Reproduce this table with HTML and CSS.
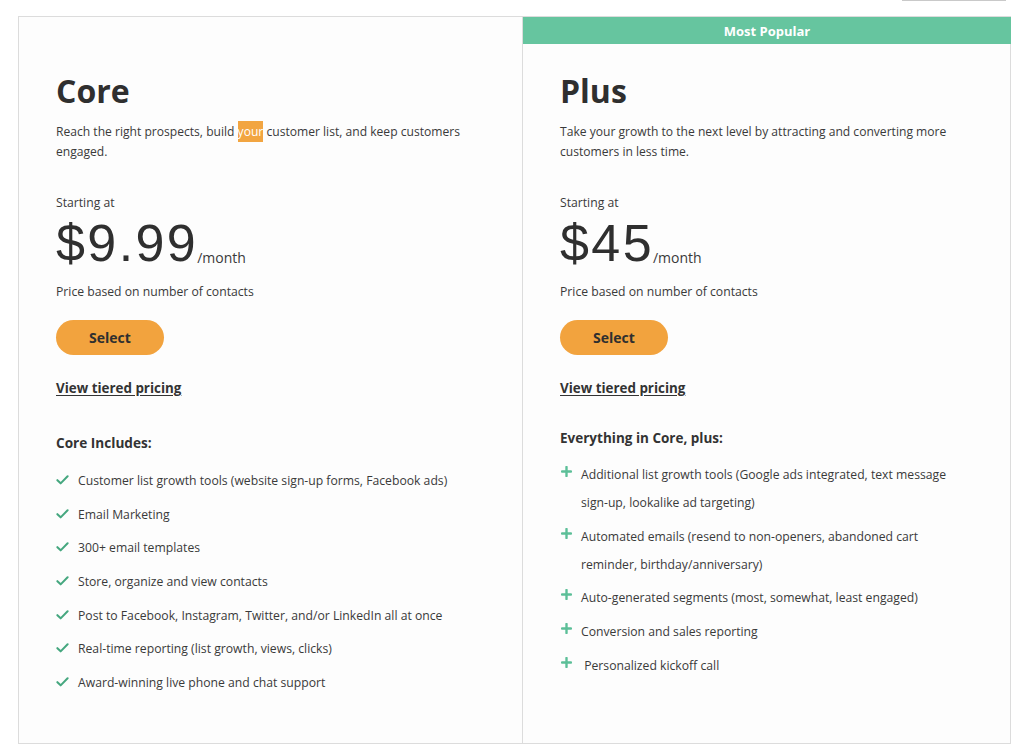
FILE: index.html
```html
<!DOCTYPE html>
<html lang="en">
<head>
<meta charset="utf-8">
<title>Pricing</title>
<link rel="stylesheet" href="styles.css">
</head>
<body>
<div class="topbar"><span class="topline"></span></div>
<div class="plans">
  <section class="plan plan-core">
    <div class="badge badge-empty"></div>
    <div class="plan-body">
      <h2 class="plan-name">Core</h2>
      <p class="plan-desc"><span>Reach the right prospects, build </span><mark class="hl">your</mark><span> customer list, and keep customers</span> <span>engaged.</span></p>
      <p class="starting">Starting at</p>
      <div class="price"><span class="amount">$9.99</span><span class="per">/month</span></div>
      <p class="based">Price based on number of contacts</p>
      <button class="select">Select</button>
      <a class="tiered" href="#">View tiered pricing</a>
      <h3 class="includes includes-core">Core Includes:</h3>
      <ul class="features">
        <li><svg class="ico" viewBox="0 0 14 12"><path d="M1.5 6.2 L5 9.6 L12.5 2" fill="none" stroke="#45a77f" stroke-width="2.2" stroke-linecap="round" stroke-linejoin="round"/></svg><span>Customer list growth tools (website sign-up forms, Facebook ads)</span></li>
        <li><svg class="ico" viewBox="0 0 14 12"><path d="M1.5 6.2 L5 9.6 L12.5 2" fill="none" stroke="#45a77f" stroke-width="2.2" stroke-linecap="round" stroke-linejoin="round"/></svg><span>Email Marketing</span></li>
        <li><svg class="ico" viewBox="0 0 14 12"><path d="M1.5 6.2 L5 9.6 L12.5 2" fill="none" stroke="#45a77f" stroke-width="2.2" stroke-linecap="round" stroke-linejoin="round"/></svg><span>300+ email templates</span></li>
        <li><svg class="ico" viewBox="0 0 14 12"><path d="M1.5 6.2 L5 9.6 L12.5 2" fill="none" stroke="#45a77f" stroke-width="2.2" stroke-linecap="round" stroke-linejoin="round"/></svg><span>Store, organize and view contacts</span></li>
        <li><svg class="ico" viewBox="0 0 14 12"><path d="M1.5 6.2 L5 9.6 L12.5 2" fill="none" stroke="#45a77f" stroke-width="2.2" stroke-linecap="round" stroke-linejoin="round"/></svg><span>Post to Facebook, Instagram, Twitter, and/or LinkedIn all at once</span></li>
        <li><svg class="ico" viewBox="0 0 14 12"><path d="M1.5 6.2 L5 9.6 L12.5 2" fill="none" stroke="#45a77f" stroke-width="2.2" stroke-linecap="round" stroke-linejoin="round"/></svg><span>Real-time reporting (list growth, views, clicks)</span></li>
        <li><svg class="ico" viewBox="0 0 14 12"><path d="M1.5 6.2 L5 9.6 L12.5 2" fill="none" stroke="#45a77f" stroke-width="2.2" stroke-linecap="round" stroke-linejoin="round"/></svg><span>Award-winning live phone and chat support</span></li>
      </ul>
    </div>
  </section>
  <section class="plan plan-plus">
    <div class="badge">Most Popular</div>
    <div class="plan-body">
      <h2 class="plan-name">Plus</h2>
      <p class="plan-desc"><span>Take your growth to the next level by attracting and converting more</span> <span>customers in less time.</span></p>
      <p class="starting">Starting at</p>
      <div class="price"><span class="amount">$45</span><span class="per">/month</span></div>
      <p class="based">Price based on number of contacts</p>
      <button class="select">Select</button>
      <a class="tiered" href="#">View tiered pricing</a>
      <h3 class="includes includes-plus">Everything in Core, plus:</h3>
      <ul class="features features-plus">
        <li><svg class="ico plus-ico" viewBox="0 0 12 12"><path d="M6 1 V11 M1 6 H11" fill="none" stroke="#5cbf98" stroke-width="2.6" stroke-linecap="round"/></svg><span>Additional list growth tools (Google ads integrated, text message sign-up, lookalike ad targeting)</span></li>
        <li><svg class="ico plus-ico" viewBox="0 0 12 12"><path d="M6 1 V11 M1 6 H11" fill="none" stroke="#5cbf98" stroke-width="2.6" stroke-linecap="round"/></svg><span>Automated emails (resend to non-openers, abandoned cart reminder, birthday/anniversary)</span></li>
        <li><svg class="ico plus-ico" viewBox="0 0 12 12"><path d="M6 1 V11 M1 6 H11" fill="none" stroke="#5cbf98" stroke-width="2.6" stroke-linecap="round"/></svg><span>Auto-generated segments (most, somewhat, least engaged)</span></li>
        <li><svg class="ico plus-ico" viewBox="0 0 12 12"><path d="M6 1 V11 M1 6 H11" fill="none" stroke="#5cbf98" stroke-width="2.6" stroke-linecap="round"/></svg><span>Conversion and sales reporting</span></li>
        <li><svg class="ico plus-ico" viewBox="0 0 12 12"><path d="M6 1 V11 M1 6 H11" fill="none" stroke="#5cbf98" stroke-width="2.6" stroke-linecap="round"/></svg><span>&nbsp;Personalized kickoff call</span></li>
      </ul>
    </div>
  </section>
</div>
</body>
</html>
```
FILE: styles.css
```css
* { box-sizing: border-box; }
html, body { margin: 0; padding: 0; background: #ffffff; }
body {
  font-family: "Open Sans", "Noto Sans", "Liberation Sans", sans-serif;
  color: #3c3c3c;
  width: 1024px;
  height: 754px;
  overflow: hidden;
}
.topbar { display: flex; justify-content: flex-end; height: 1px; padding-right: 18px; }
.topline { display: block; width: 104px; height: 1px; background: #c9c9c9; }

.plans {
  display: grid;
  grid-template-columns: 504px 488px;
  margin: 15px 0 0 18px;
  width: 993px;
  height: 728px;
  border: 1px solid #dcdcdc;
  background: #fdfdfd;
}
.plan-core { border-right: 1px solid #dcdcdc; }
.badge {
  height: 27px;
  background: #66c59f;
  color: #ffffff;
  font-weight: 700;
  font-size: 13px;
  display: flex;
  align-items: center;
  justify-content: center;
}
.badge-empty { background: transparent; }
.plan-body { padding: 0 0 0 37px; width: 449px; }

.plan-name {
  margin: 27px 0 0;
  font-size: 32px;
  line-height: 40px;
  font-weight: 700;
  color: #2f2f2f;
}
.plan-desc {
  margin: 11px 0 0;
  font-size: 12.1px;
  line-height: 20px;
  color: #3a3a3a;
}
.hl { background: #f2a541; color: #ffffff; padding: 2px 0; }
.starting { margin: 31px 0 0; font-size: 12.2px; line-height: 20px; color: #3a3a3a; }
.price { display: flex; align-items: baseline; height: 58px; padding-top: 3px; }
.amount {
  font-family: "Liberation Sans", "Open Sans", sans-serif;
  font-size: 52px;
  line-height: 54px;
  color: #2f2f2f;
  font-weight: 400;
  letter-spacing: 2.4px;
}
.per { font-size: 14px; color: #3a3a3a; margin-left: -1px; position: relative; top: 2px; }
.based { margin: 11px 0 0; font-size: 12.2px; line-height: 20px; color: #3a3a3a; }
.select {
  display: block;
  margin-top: 18px;
  width: 108px;
  height: 35px;
  border: none;
  border-radius: 18px;
  background: #f2a33e;
  color: #2f2f2f;
  font-family: inherit;
  font-weight: 700;
  font-size: 14px;
  padding: 0;
}
.tiered {
  display: inline-block;
  margin-top: 23px;
  font-size: 13.4px;
  line-height: 20px;
  font-weight: 700;
  color: #333333;
  text-decoration: underline;
  text-underline-offset: 2px;
}
.includes {
  margin: 35px 0 0;
  font-size: 13.6px;
  line-height: 20px;
  font-weight: 700;
  color: #333333;
}
.includes-plus { margin-top: 30px; font-size: 13.5px; }
.features { list-style: none; margin: 14px 0 0; padding: 0; }
.features-plus { margin-top: 13px; }
.features li {
  display: flex;
  align-items: flex-start;
  gap: 9px;
  font-size: 12.2px;
  line-height: 28px;
  margin-bottom: 5.7px;
  color: #3a3a3a;
}
.ico { flex: none; width: 13px; height: 12px; margin-top: 7px; }
.plus-ico { width: 11px; height: 11px; margin-top: 5px; margin-left: 1px; }
```
